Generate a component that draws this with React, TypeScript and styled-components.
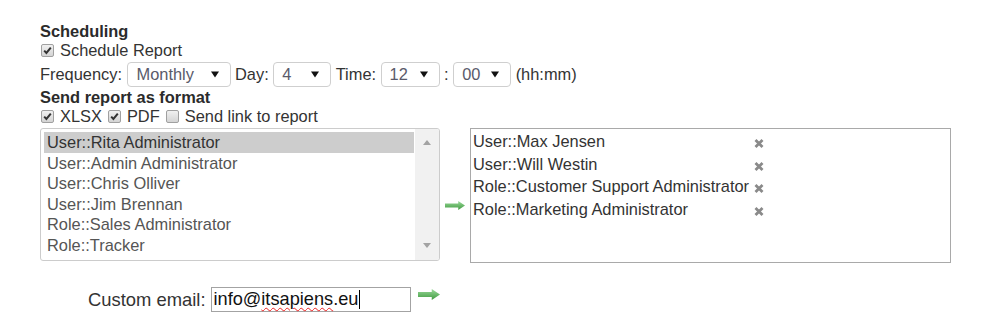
import React from "react";
import styled, { createGlobalStyle } from "styled-components";

const GlobalStyle = createGlobalStyle`
  html, body {
    margin: 0;
    padding: 0;
    background: #fff;
  }
  body {
    font-family: "Liberation Sans", Arial, sans-serif;
    font-size: 16.4px;
    color: #333;
  }
`;

const Page = styled.div`
  padding: 22px 0 0 40px;
`;

const Heading = styled.div`
  font-weight: bold;
  line-height: 19px;
  color: #2b2b2b;
`;

const Line = styled.div`
  display: flex;
  align-items: center;
  line-height: 19px;
  height: 19px;
`;

const CheckOption = styled.label`
  display: inline-flex;
  align-items: center;
  margin-right: 6px;
`;

const Box = styled.span<{ $first?: boolean }>`
  display: inline-flex;
  align-items: center;
  justify-content: center;
  box-sizing: border-box;
  width: 13px;
  height: 13px;
  margin: 0 6px 0 ${(p) => (p.$first ? "1px" : "0")};
  border: 1px solid #a0a0a0;
  border-radius: 2px;
  background: linear-gradient(#f0f0f0, #d4d4d4);
`;

const Checkbox = ({ checked, first }: { checked?: boolean; first?: boolean }) => (
  <Box $first={first}>
    {checked && (
      <svg width="11" height="11" viewBox="0 0 11 11">
        <path d="M2.2 5.6 L4.4 8 L8.8 2.6" fill="none" stroke="#333" strokeWidth="2" />
      </svg>
    )}
  </Box>
);

const ScheduleRow = styled.div`
  display: flex;
  align-items: center;
  gap: 4.5px;
  padding: 2px 0 1px;
  line-height: 19px;
`;

const SelectBox = styled.div<{ $w: number; $pl?: number }>`
  display: inline-flex;
  align-items: center;
  justify-content: space-between;
  box-sizing: border-box;
  width: ${(p) => p.$w}px;
  height: 25px;
  padding: 0 11px 0 ${(p) => p.$pl ?? 8}px;
  border: 1px solid #cfcfcf;
  border-radius: 4px;
  background: #fff;
  color: #5a5a6a;
`;

const Select = ({ value, w, pl }: { value: string; w: number; pl?: number }) => (
  <SelectBox $w={w} $pl={pl}>
    <span>{value}</span>
    <svg width="8" height="7" viewBox="0 0 8 7">
      <polygon points="0,0.5 8,0.5 4,6.5" fill="#111" />
    </svg>
  </SelectBox>
);

const ListsRow = styled.div`
  display: flex;
  align-items: flex-start;
  margin-top: 2px;
`;

const ListBox = styled.div`
  display: flex;
  box-sizing: border-box;
  width: 400px;
  height: 133px;
  border: 1px solid #cccccc;
  border-radius: 3px;
  overflow: hidden;
`;

const Options = styled.div`
  flex: 1;
  padding: 3px 1px 3px 3px;
`;

const Option = styled.div<{ $selected?: boolean }>`
  height: 20.6px;
  line-height: 20.6px;
  padding: 0 3px;
  color: ${(p) => (p.$selected ? "#333" : "#555")};
  background: ${(p) => (p.$selected ? "#cdcdcd" : "transparent")};
  white-space: nowrap;
`;

const ScrollTrack = styled.div`
  display: flex;
  flex-direction: column;
  align-items: center;
  justify-content: space-between;
  width: 24px;
  padding: 11px 0 12px;
  background: #f1f1f1;
`;

const CenteredArrow = styled.div`
  align-self: center;
  display: flex;
  margin: 20px 5px 0;
`;

const Chosen = styled.div`
  display: grid;
  grid-template-columns: max-content max-content;
  grid-auto-rows: 22.8px;
  align-items: center;
  align-content: start;
  column-gap: 5px;
  box-sizing: border-box;
  width: 481px;
  height: 135px;
  padding: 1px 2px;
  border: 1px solid #a9a9a9;
  color: #333;
`;

const RemoveIcon = styled.svg`
  margin-top: 4px;
`;

const EmailRow = styled.div`
  display: flex;
  align-items: flex-start;
  margin-top: 24px;
  padding-left: 48px;
`;

const EmailLabel = styled.span`
  font-size: 18.4px;
  line-height: 25px;
  color: #333;
  margin-right: 5px;
`;

const EmailInput = styled.div`
  display: flex;
  align-items: center;
  box-sizing: border-box;
  width: 200px;
  height: 25px;
  padding-left: 2px;
  border: 1px solid #a3a3a3;
  font-size: 18.2px;
  color: #111;
`;

const Misspelled = styled.span`
  text-decoration: underline wavy #e22;
  text-decoration-thickness: 1px;
  text-underline-offset: 2px;
`;

const Caret = styled.span`
  display: inline-block;
  width: 1px;
  height: 19px;
  margin-left: 1px;
  background: #000;
`;

const SendArrow = styled.div`
  display: flex;
  margin: 2px 0 0 7px;
`;

const Arrow = ({ w, h }: { w: number; h: number }) => {
  const shaft = h * 0.28;
  const head = w - h * 0.75;
  return (
    <svg width={w} height={h} viewBox={`0 0 ${w} ${h}`}>
      <defs>
        <linearGradient id={`g${w}`} x1="0" y1="0" x2="0" y2="1">
          <stop offset="0" stopColor="#9ad99a" />
          <stop offset="1" stopColor="#3f9a3f" />
        </linearGradient>
      </defs>
      <path
        d={`M0 ${shaft} H${head} V0 L${w} ${h / 2} L${head} ${h} V${h - shaft} H0 Z`}
        fill={`url(#g${w})`}
      />
    </svg>
  );
};

const Remove = () => (
  <RemoveIcon width="10" height="9" viewBox="0 0 10 9">
    <path d="M1.5 1 L8.5 8 M8.5 1 L1.5 8" stroke="#8a8a8a" strokeWidth="2.8" />
  </RemoveIcon>
);

const available = [
  "User::Rita Administrator",
  "User::Admin Administrator",
  "User::Chris Olliver",
  "User::Jim Brennan",
  "Role::Sales Administrator",
  "Role::Tracker",
];

const chosen = [
  "User::Max Jensen",
  "User::Will Westin",
  "Role::Customer Support Administrator",
  "Role::Marketing Administrator",
];

export default function App() {
  return (
    <Page>
      <GlobalStyle />
      <Heading>Scheduling</Heading>
      <Line>
        <CheckOption>
          <Checkbox checked first />
          Schedule Report
        </CheckOption>
      </Line>
      <ScheduleRow>
        <span>Frequency:</span>
        <Select value="Monthly" w={104} pl={9} />
        <span>Day:</span>
        <Select value="4" w={58} />
        <span>Time:</span>
        <Select value="12" w={59} />
        <span>:</span>
        <Select value="00" w={58} />
        <span>(hh:mm)</span>
      </ScheduleRow>
      <Heading>Send report as format</Heading>
      <Line>
        <CheckOption>
          <Checkbox checked first />
          XLSX
        </CheckOption>
        <CheckOption>
          <Checkbox checked />
          PDF
        </CheckOption>
        <CheckOption>
          <Checkbox />
          Send link to report
        </CheckOption>
      </Line>
      <ListsRow>
        <ListBox>
          <Options>
            {available.map((name, i) => (
              <Option key={name} $selected={i === 0}>
                {name}
              </Option>
            ))}
          </Options>
          <ScrollTrack>
            <svg width="8" height="5" viewBox="0 0 8 5">
              <polygon points="0,5 8,5 4,0" fill="#a3a3a3" />
            </svg>
            <svg width="8" height="5" viewBox="0 0 8 5">
              <polygon points="0,0 8,0 4,5" fill="#a3a3a3" />
            </svg>
          </ScrollTrack>
        </ListBox>
        <CenteredArrow>
          <Arrow w={20} h={9} />
        </CenteredArrow>
        <Chosen>
          {chosen.map((name) => (
            <React.Fragment key={name}>
              <span>{name}</span>
              <Remove />
            </React.Fragment>
          ))}
        </Chosen>
      </ListsRow>
      <EmailRow>
        <EmailLabel>Custom email:</EmailLabel>
        <EmailInput>
          info@<Misspelled>itsapiens</Misspelled>.eu
          <Caret />
        </EmailInput>
        <SendArrow>
          <Arrow w={22} h={11} />
        </SendArrow>
      </EmailRow>
    </Page>
  );
}
